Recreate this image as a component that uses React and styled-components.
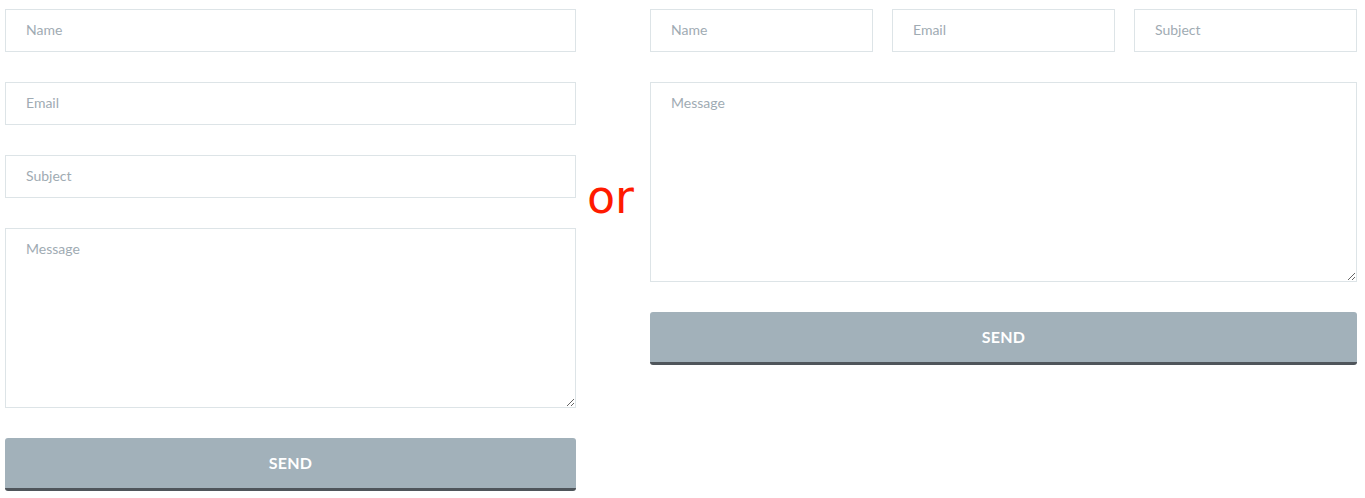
import React from 'react';
import styled, { createGlobalStyle } from 'styled-components';

const GlobalStyle = createGlobalStyle`
  * { box-sizing: border-box; }
  body {
    margin: 0;
    background: #fff;
    font-family: Lato, "Open Sans", sans-serif;
  }
`;

const Page = styled.div`
  display: flex;
  align-items: flex-start;
  padding: 9px 8px 0 5px;
`;

const Form = styled.form`
  display: flex;
  flex-direction: column;
  gap: 30px;
  width: ${props => props.width}px;
  flex-shrink: 0;
`;

const Row = styled.div`
  display: flex;
  gap: 19px;
`;

const Field = styled.input`
  display: block;
  width: 100%;
  height: 43px;
  padding: 0 20px 2px;
  border: 1px solid #dde4e7;
  border-radius: 0;
  font-family: Lato, sans-serif;
  font-size: 14px;
  color: #555;
  outline: none;

  &::placeholder {
    color: #9fabb3;
  }
`;

const Message = styled.textarea`
  display: block;
  width: 100%;
  height: ${props => props.height}px;
  padding: 10px 20px;
  border: 1px solid #dde4e7;
  font-family: Lato, sans-serif;
  font-size: 14px;
  line-height: 20px;
  resize: vertical;
  outline: none;

  &::placeholder {
    color: #9fabb3;
  }
`;

const SendButton = styled.button`
  display: block;
  width: 100%;
  height: 53px;
  padding: 0 0 2px;
  border: 0;
  border-bottom: 3px solid #4f555b;
  border-radius: 3px;
  background: #a2b1ba;
  color: #fff;
  font-family: Lato, sans-serif;
  font-size: 16px;
  font-weight: 700;
  letter-spacing: 0.2px;
  cursor: pointer;
`;

const Or = styled.div`
  width: 74px;
  flex-shrink: 0;
  margin-top: 158px;
  text-align: center;
  padding-right: 5px;
  font-family: "DejaVu Sans", sans-serif;
  font-size: 46px;
  line-height: 60px;
  color: #ff1a00;
`;

const App = () => {
  return (
    <>
      <GlobalStyle />
      <Page>
        <Form width={571}>
          <Field placeholder="Name" />
          <Field placeholder="Email" />
          <Field placeholder="Subject" />
          <Message placeholder="Message" height={180} />
          <SendButton type="button">SEND</SendButton>
        </Form>
        <Or>or</Or>
        <Form width={707}>
          <Row>
            <Field placeholder="Name" />
            <Field placeholder="Email" />
            <Field placeholder="Subject" />
          </Row>
          <Message placeholder="Message" height={200} />
          <SendButton type="button">SEND</SendButton>
        </Form>
      </Page>
    </>
  );
};

export default App;
